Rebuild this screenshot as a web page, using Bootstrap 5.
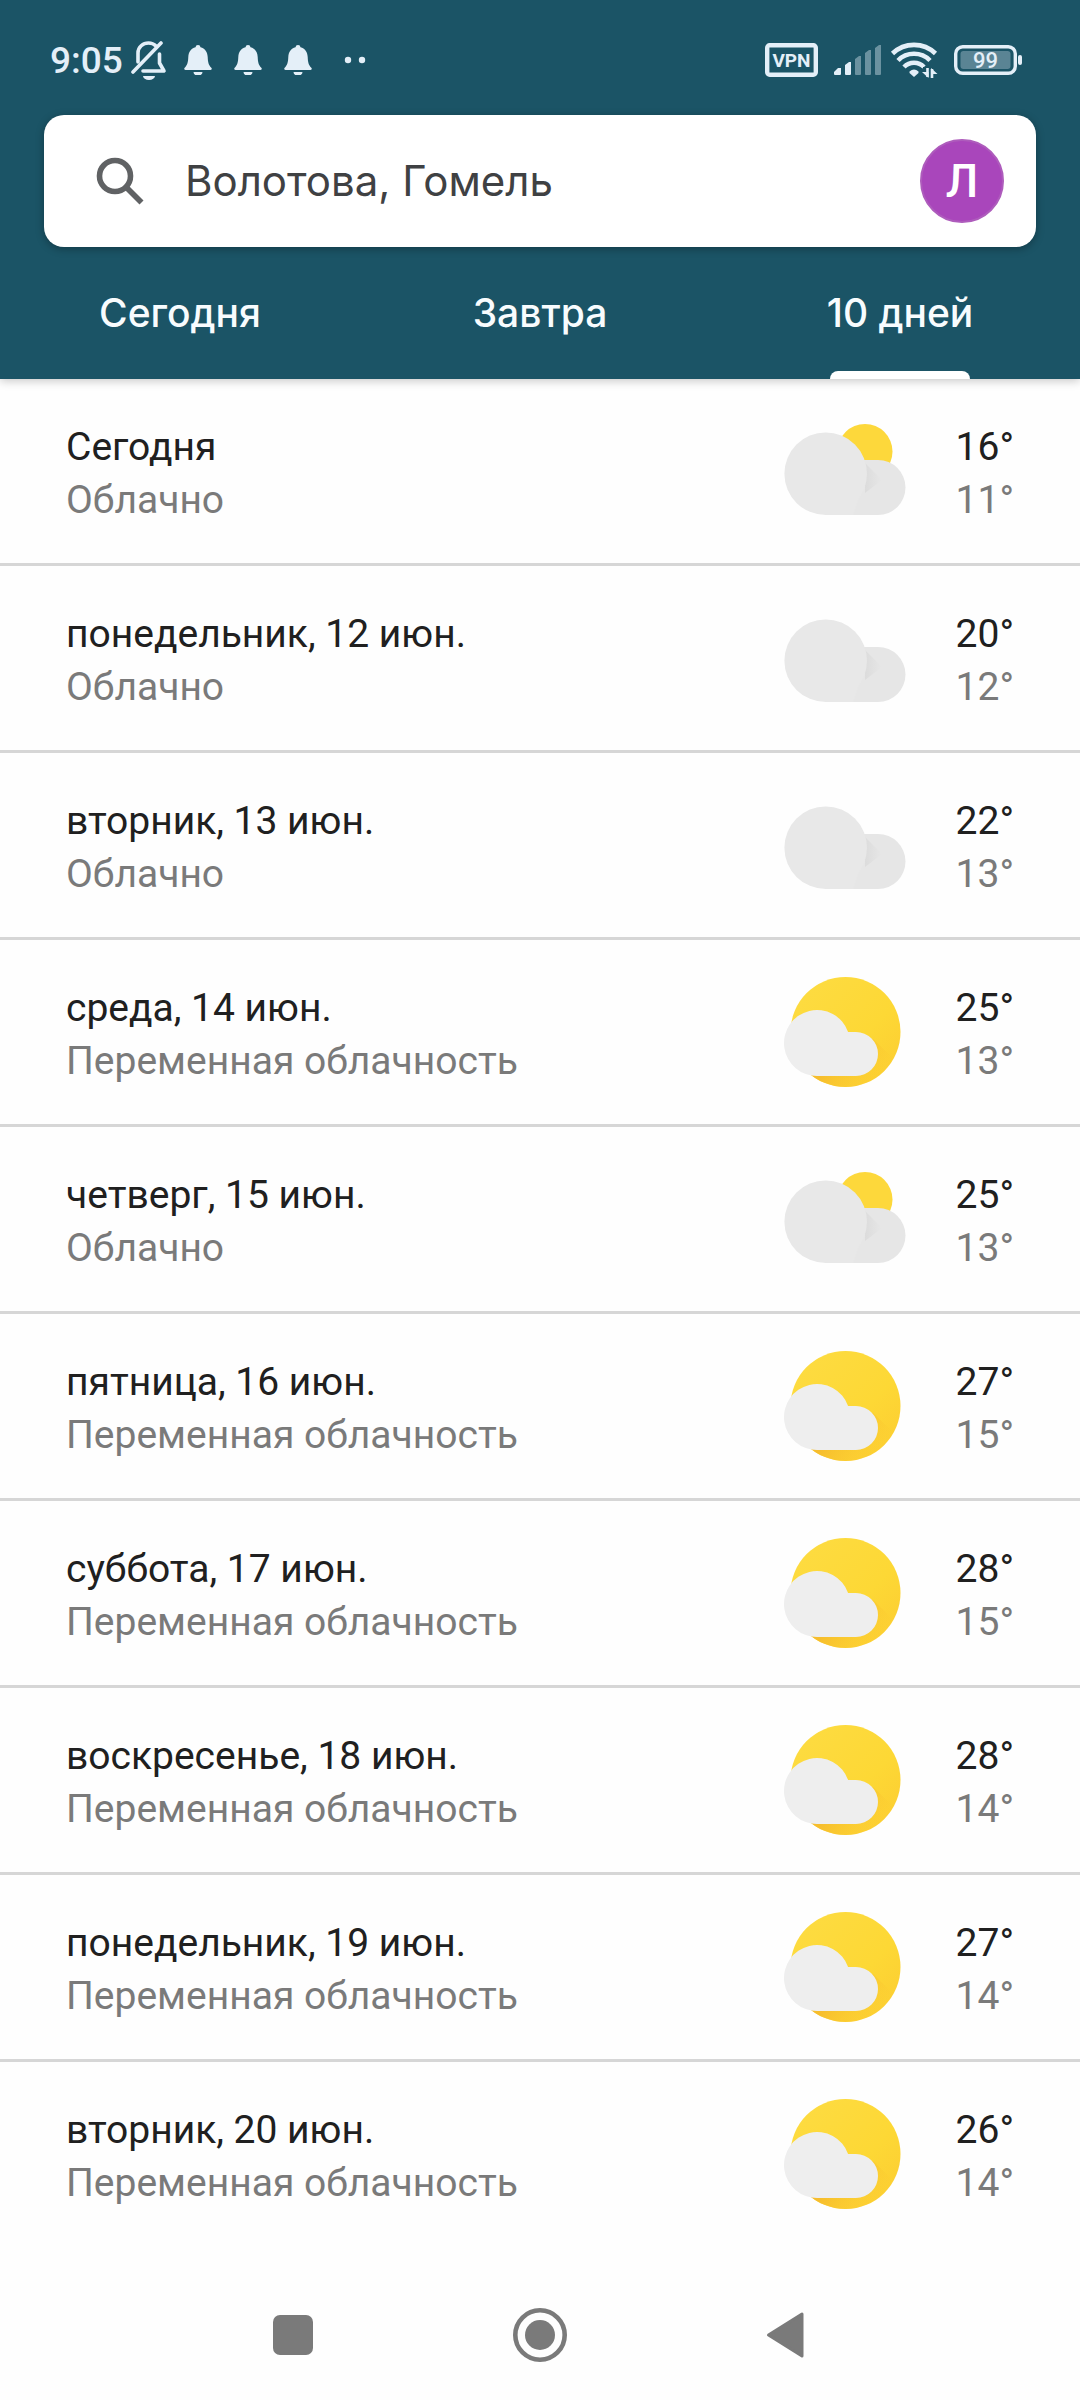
<!DOCTYPE html>
<html lang="ru">
<head>
<meta charset="utf-8">
<meta name="viewport" content="width=device-width, initial-scale=1">
<title>Погода – Гомель</title>
<link href="https://cdn.jsdelivr.net/npm/bootstrap@5.3.0/dist/css/bootstrap.min.css" rel="stylesheet">
<style>
  body { font-family: Roboto, "Noto Sans", sans-serif; background: #fefefe; color: #202020; }
  svg { display: block; flex: none; }
  .app-head { background: #1b5466; box-shadow: 0 2px 9px rgba(0, 0, 0, .22); z-index: 1; }
  .status { height: 115px; padding: 4px 58px 0 50px; color: #e4eff8; }
  .clock { font-size: 37px; line-height: 44px; width: 81px; padding-top: 3px; }
  .bells { gap: 22px; padding-left: 17px; }
  .finder { height: 132px; margin: 0 44px; padding: 0 32px 0 51px; border-radius: 20px; box-shadow: 0 2px 8px rgba(0, 0, 0, .3); }
  .finder input { font-family: Inter, Roboto, sans-serif; font-size: 42px; line-height: 56px; color: #3f4143; margin-left: 40px; min-width: 0; }
  .avatar { width: 84px; height: 84px; background: #a946bb; border: 2px solid #ae5cbc; font-size: 46px; line-height: 50px; }
  .tabs-row { height: 132px; }
  .tabs-row a { font-family: Inter, Roboto, sans-serif; font-size: 39px; line-height: 44px; font-weight: 500; color: #f8fcfe; padding-top: 44px; }
  .tabs-row a.active::after { content: ""; width: 140px; height: 8px; border-radius: 8px 8px 0 0; background: #fff; }
  .day { height: 187px; padding: 0 66px; border-bottom: 3px solid #d6d6d6; font-size: 39px; line-height: 53px; }
  .day > div { padding-top: 6px; }
  .day:last-child { border-bottom-color: transparent; }
  .dim { color: #7a7a7a; }
  .degrees { width: 105px; }
  .sysnav { height: 151px; padding-top: 21px; gap: 193px; }
  .sysnav button { width: 54px; height: 54px; }
</style>
<script src="https://cdn.jsdelivr.net/npm/bootstrap@5.3.0/dist/js/bootstrap.bundle.min.js"></script>
</head>
<body>
<svg width="0" height="0" class="position-absolute" aria-hidden="true">
  <defs>
    <linearGradient id="gSun" x1="0" y1="0" x2="1" y2="1"><stop offset="0" stop-color="#fddc43"/><stop offset=".6" stop-color="#fdd835"/><stop offset="1" stop-color="#fccb31"/></linearGradient>
    <linearGradient id="gShade" gradientUnits="userSpaceOnUse" x1="84" y1="0" x2="100" y2="0"><stop offset="0" stop-color="#dcdcdc"/><stop offset="1" stop-color="#e6e6e6"/></linearGradient>
    <linearGradient id="gCast" gradientUnits="userSpaceOnUse" x1="60" y1="80" x2="98" y2="108"><stop offset="0" stop-color="#f6bd2d"/><stop offset="1" stop-color="#fbc62f" stop-opacity="0"/></linearGradient>
    <clipPath id="cSun"><circle cx="64.500" cy="64" r="55"/></clipPath>
  </defs>
  <symbol id="cloud" viewBox="0 0 128 128">
    <path fill="#e6e6e6" d="M45 53H97a27.500 27.500 0 0 1 0 55H45z"/>
    <path fill="url(#gShade)" d="M84 56L101 73L84 86z"/>
    <circle cx="44.700" cy="66.700" r="41.300" fill="#e8e8e8"/>
    <path fill="#e8e8e8" d="M44 90H78L72 108H44z"/>
  </symbol>
  <symbol id="cloud-sun" viewBox="0 0 128 128">
    <circle cx="84" cy="44.500" r="27.500" fill="#fdd83b"/>
    <use href="#cloud" width="128" height="128"/>
  </symbol>
  <symbol id="partly" viewBox="0 0 128 128">
    <circle cx="64.500" cy="64" r="55" fill="url(#gSun)"/>
    <path clip-path="url(#cSun)" fill="url(#gCast)" d="M92 71L122 100L90 124L48 122L22 102L40 100z"/>
    <path fill="#eeeeee" d="M36.600 108a33 33 0 1 1 30.500-44H75a22 22 0 0 1 0 44z"/>
  </symbol>
  <symbol id="bell" viewBox="0 0 28 30">
    <path fill="currentColor" d="M14 0a2.500 2.500 0 0 1 2.500 2.300C21 3.500 23.500 7 23.700 12c.2 5 .8 8 3.600 10.700.9.900.5 2.300-.8 2.300h-25C.2 25-.2 23.600.7 22.700 3.500 20 4.100 17 4.300 12 4.500 7 7 3.500 11.500 2.300A2.500 2.500 0 0 1 14 0zM9.500 27h9a4.500 3.500 0 0 1-9 0z"/>
  </symbol>
</svg>

<header class="app-head position-relative">
  <div class="status d-flex align-items-center justify-content-between">
    <div class="d-flex align-items-center">
      <span class="clock fw-medium">9:05</span>
      <svg width="36" height="40" viewBox="0 0 36 40" fill="none" stroke="currentColor" stroke-width="3.600" stroke-linecap="round" stroke-linejoin="round"><path d="M7 22V13C7 7 12 3 17.500 3c3 0 5.500 1 7.500 3M28.500 14v9l4.500 8H12"/><path d="M2 32L30 3"/><path d="M12 36h12a6 4 0 0 1-12 0z" fill="currentColor" stroke="none"/></svg>
      <div class="bells d-flex align-items-center">
        <svg width="28" height="30"><use href="#bell"/></svg>
        <svg width="28" height="30"><use href="#bell"/></svg>
        <svg width="28" height="30"><use href="#bell"/></svg>
        <svg class="ms-2" width="24" height="8" viewBox="0 0 24 8" fill="currentColor"><circle cx="6" cy="4" r="3.200"/><circle cx="20" cy="4" r="3.200"/></svg>
      </div>
    </div>
    <div class="d-flex align-items-center">
      <svg width="53" height="34" viewBox="0 0 53 34"><rect x="2.200" y="2.200" width="48.600" height="29.600" rx="2.500" fill="none" stroke="currentColor" stroke-width="4.400"/><text x="26.500" y="24" text-anchor="middle" font-size="19" font-weight="700" fill="currentColor">VPN</text></svg>
      <svg class="ms-3" width="48" height="32" viewBox="0 0 48 32" fill="currentColor"><path d="M0 30v-2l4-4h3v6q0 1-1 1H1q-1 0-1-1zM11 30v-9l4-3h2v12q0 1-1 1h-4q-1 0-1-1z"/><path opacity=".4" d="M21 30V15l4-3h2v18q0 1-1 1h-4q-1 0-1-1zM31 30V9l4-3h2v24q0 1-1 1h-4q-1 0-1-1zM41 30V4l4-3h2v29q0 1-1 1h-4q-1 0-1-1z"/></svg>
      <svg class="ms-2" width="48" height="38" viewBox="-1 0 48 38" fill="none" stroke="currentColor" stroke-width="4.600"><path d="M1.500 12.500a31 31 0 0 1 43 0M7 19.500a22.500 22.500 0 0 1 32 0M13 26a14 14 0 0 1 20 0"/><path stroke="none" fill="currentColor" d="M18.500 30.500q4.500-4 9 0v1.500L23 36l-4.500-4z"/><path stroke="#1b5466" stroke-width="6" d="M35 26v13M42 26v13"/><path stroke-width="2.600" d="M36.500 27v9M41 28v9"/><path stroke="none" fill="currentColor" d="M31 31h6.500v6zM46.500 33H40v-6z"/></svg>
      <svg class="ms-3" width="68" height="30" viewBox="1 0 68 30"><rect x="2.700" y="1.700" width="59.600" height="26.600" rx="7" fill="none" stroke="currentColor" stroke-width="3.400"/><rect x="7.500" y="6" width="50" height="18" rx="3" fill="#5a8494"/><rect x="65" y="10" width="4" height="10" rx="2" fill="currentColor"/><text x="32.500" y="23" text-anchor="middle" font-size="22" font-weight="500" fill="currentColor">99</text></svg>
    </div>
  </div>

  <form class="finder bg-white d-flex align-items-center" role="search" onsubmit="return false">
    <svg width="50" height="50" viewBox="0 0 50 50" fill="none" stroke="#606264" stroke-width="5.600"><circle cx="20" cy="20" r="15.500"/><path d="M31 31L46.500 46.500"/></svg>
    <input class="flex-grow-1 border-0 bg-transparent p-0" type="text" value="Волотова, Гомель" aria-label="Поиск места">
    <button class="avatar rounded-circle text-white p-0 fw-medium" type="button" aria-label="Аккаунт">Л</button>
  </form>

  <nav class="tabs-row d-flex text-center" aria-label="Период">
    <a class="col d-flex flex-column align-items-center justify-content-between text-decoration-none" href="#today">Сегодня</a>
    <a class="col d-flex flex-column align-items-center justify-content-between text-decoration-none" href="#tomorrow">Завтра</a>
    <a class="col d-flex flex-column align-items-center justify-content-between text-decoration-none active" href="#ten" aria-current="page">10 дней</a>
  </nav>
</header>

<main>
  <ul class="list-unstyled mb-0">
    <li class="day d-flex align-items-center"><div class="flex-grow-1"><div>Сегодня</div><div class="dim">Облачно</div></div><svg width="128" height="128"><use href="#cloud-sun"/></svg><div class="degrees text-end"><div>16°</div><div class="dim">11°</div></div></li>
    <li class="day d-flex align-items-center"><div class="flex-grow-1"><div>понедельник, 12 июн.</div><div class="dim">Облачно</div></div><svg width="128" height="128"><use href="#cloud"/></svg><div class="degrees text-end"><div>20°</div><div class="dim">12°</div></div></li>
    <li class="day d-flex align-items-center"><div class="flex-grow-1"><div>вторник, 13 июн.</div><div class="dim">Облачно</div></div><svg width="128" height="128"><use href="#cloud"/></svg><div class="degrees text-end"><div>22°</div><div class="dim">13°</div></div></li>
    <li class="day d-flex align-items-center"><div class="flex-grow-1"><div>среда, 14 июн.</div><div class="dim">Переменная облачность</div></div><svg width="128" height="128"><use href="#partly"/></svg><div class="degrees text-end"><div>25°</div><div class="dim">13°</div></div></li>
    <li class="day d-flex align-items-center"><div class="flex-grow-1"><div>четверг, 15 июн.</div><div class="dim">Облачно</div></div><svg width="128" height="128"><use href="#cloud-sun"/></svg><div class="degrees text-end"><div>25°</div><div class="dim">13°</div></div></li>
    <li class="day d-flex align-items-center"><div class="flex-grow-1"><div>пятница, 16 июн.</div><div class="dim">Переменная облачность</div></div><svg width="128" height="128"><use href="#partly"/></svg><div class="degrees text-end"><div>27°</div><div class="dim">15°</div></div></li>
    <li class="day d-flex align-items-center"><div class="flex-grow-1"><div>суббота, 17 июн.</div><div class="dim">Переменная облачность</div></div><svg width="128" height="128"><use href="#partly"/></svg><div class="degrees text-end"><div>28°</div><div class="dim">15°</div></div></li>
    <li class="day d-flex align-items-center"><div class="flex-grow-1"><div>воскресенье, 18 июн.</div><div class="dim">Переменная облачность</div></div><svg width="128" height="128"><use href="#partly"/></svg><div class="degrees text-end"><div>28°</div><div class="dim">14°</div></div></li>
    <li class="day d-flex align-items-center"><div class="flex-grow-1"><div>понедельник, 19 июн.</div><div class="dim">Переменная облачность</div></div><svg width="128" height="128"><use href="#partly"/></svg><div class="degrees text-end"><div>27°</div><div class="dim">14°</div></div></li>
    <li class="day d-flex align-items-center"><div class="flex-grow-1"><div>вторник, 20 июн.</div><div class="dim">Переменная облачность</div></div><svg width="128" height="128"><use href="#partly"/></svg><div class="degrees text-end"><div>26°</div><div class="dim">14°</div></div></li>
  </ul>
</main>

<footer class="sysnav d-flex align-items-center justify-content-center">
  <button class="border-0 bg-transparent p-0" type="button" aria-label="Недавние"><svg width="54" height="54"><rect x="7" y="7" width="40" height="40" rx="7" fill="#7a7a7a"/></svg></button>
  <button class="border-0 bg-transparent p-0" type="button" aria-label="Домой"><svg width="54" height="54"><circle cx="27" cy="27" r="24.700" fill="none" stroke="#7a7a7a" stroke-width="4.600"/><circle cx="27" cy="27" r="15" fill="#7a7a7a"/></svg></button>
  <button class="border-0 bg-transparent p-0" type="button" aria-label="Назад"><svg width="54" height="54"><path d="M8.500 27L42 6v42z" fill="#7a7a7a" stroke="#7a7a7a" stroke-width="3" stroke-linejoin="round"/></svg></button>
</footer>
</body>
</html>
